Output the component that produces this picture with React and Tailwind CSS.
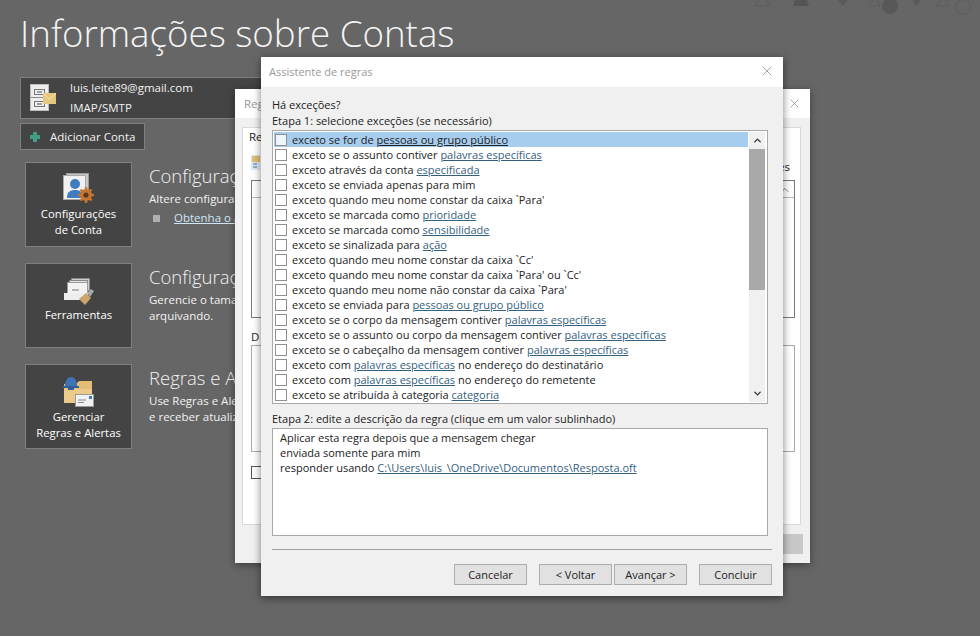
import React from "react";
import { X, ChevronUp, ChevronDown } from "lucide-react";

const rules = [
  [["exceto se for de "], ["pessoas ou grupo público", true]],
  [["exceto se o assunto contiver "], ["palavras específicas", true]],
  [["exceto através da conta "], ["especificada", true]],
  [["exceto se enviada apenas para mim"]],
  [["exceto quando meu nome constar da caixa `Para'"]],
  [["exceto se marcada como "], ["prioridade", true]],
  [["exceto se marcada como "], ["sensibilidade", true]],
  [["exceto se sinalizada para "], ["ação", true]],
  [["exceto quando meu nome constar da caixa `Cc'"]],
  [["exceto quando meu nome constar da caixa `Para' ou `Cc'"]],
  [["exceto quando meu nome não constar da caixa `Para'"]],
  [["exceto se enviada para "], ["pessoas ou grupo público", true]],
  [["exceto se o corpo da mensagem contiver "], ["palavras específicas", true]],
  [["exceto se o assunto ou corpo da mensagem contiver "], ["palavras específicas", true]],
  [["exceto se o cabeçalho da mensagem contiver "], ["palavras específicas", true]],
  [["exceto com "], ["palavras específicas", true], [" no endereço do destinatário"]],
  [["exceto com "], ["palavras específicas", true], [" no endereço do remetente"]],
  [["exceto se atribuída à categoria "], ["categoria", true]],
];

function AccountIcon() {
  return (
    <svg width="27" height="28" viewBox="0 0 27 28">
      <rect x="0.5" y="0.5" width="18" height="26" fill="#eeeeee" stroke="#bdbdbd" />
      <line x1="1" y1="13.5" x2="18" y2="13.5" stroke="#8a8a8a" />
      <rect x="4.5" y="5.5" width="10" height="5" fill="none" stroke="#777" />
      <rect x="4.5" y="17.5" width="10" height="5" fill="none" stroke="#777" />
      <line x1="7" y1="8" x2="12" y2="8" stroke="#555" />
      <line x1="7" y1="20" x2="12" y2="20" stroke="#555" />
      <rect x="13" y="9" width="13" height="11" fill="#e5c77f" />
      <path d="M13 9l6.5 6 6.5-6" fill="none" stroke="#f6e6b8" />
    </svg>
  );
}

function SettingsIcon() {
  return (
    <svg width="31" height="30" viewBox="0 0 31 30">
      <rect x="3.5" y="0.5" width="22" height="23" fill="#c9c9c9" stroke="#9a9a9a" />
      <rect x="0.5" y="2.5" width="22" height="24" fill="#f1f1f1" stroke="#a8a8a8" />
      <circle cx="12" cy="11" r="5" fill="#3f7cc0" />
      <path d="M4 25c0-6 3-8 8-8s8 2 8 8z" fill="#3f7cc0" />
      <circle cx="23" cy="22" r="6" fill="#c9752e" />
      <g stroke="#c9752e" strokeWidth="2.4">
        <line x1="23" y1="14" x2="23" y2="30" />
        <line x1="15" y1="22" x2="31" y2="22" />
        <line x1="17.5" y1="16.5" x2="28.5" y2="27.5" />
        <line x1="28.5" y1="16.5" x2="17.5" y2="27.5" />
      </g>
      <circle cx="23" cy="22" r="2.6" fill="#5a3a1e" />
    </svg>
  );
}

function ToolsIcon() {
  return (
    <svg width="30" height="28" viewBox="0 0 30 28">
      <rect x="7.5" y="0.5" width="18" height="12" fill="#cfcfcf" stroke="#8a8a8a" />
      <rect x="5.5" y="2.5" width="18" height="12" fill="#e2e2e2" stroke="#8a8a8a" />
      <rect x="3.5" y="4.5" width="20" height="13" fill="#f2f2f2" stroke="#9a9a9a" />
      <line x1="8" y1="12" x2="15" y2="12" stroke="#777" />
      <rect x="0" y="15" width="24" height="7" fill="#ededed" />
      <path d="M15 21l7-6 5 5-6 7z" fill="#c9a56a" />
      <path d="M23 15l4-4 3 2-4 6z" fill="#a8a8a8" />
    </svg>
  );
}

function RulesIcon() {
  return (
    <svg width="31" height="32" viewBox="0 0 31 32">
      <path d="M1 9h12l3-3h13v22H1z" fill="#e2bd74" />
      <path d="M1 14h28v14H1z" fill="#eccb8a" />
      <path d="M2 11c0-12 12-12 12 0v2H2z" fill="#3f73b5" />
      <rect x="0" y="11" width="16" height="2" fill="#2f5f9e" />
      <rect x="5" y="13" width="6" height="2" fill="#2f5f9e" />
      <rect x="12.5" y="19.5" width="18" height="12" fill="#f2f2f2" stroke="#9a9a9a" />
      <rect x="26" y="21" width="3" height="3" fill="#3f7cc0" />
      <line x1="15" y1="25" x2="23" y2="25" stroke="#888" />
      <line x1="15" y1="27.5" x2="21" y2="27.5" stroke="#888" />
    </svg>
  );
}

function Tile({ icon, lines, area }) {
  return (
    <button className="w-[107px] h-[85px] shrink-0 bg-[#444444] border border-[#7f7f7f] flex flex-col items-center text-white text-[11.3px] leading-[16px]">
      <div className={`flex justify-center items-end ${area}`}>{icon}</div>
      <div>
        {lines.map((l) => (
          <div key={l}>{l}</div>
        ))}
      </div>
    </button>
  );
}

function Section({ icon, lines, area, title, children }) {
  return (
    <div className="flex gap-[17px] h-[85px]">
      <Tile icon={icon} lines={lines} area={area} />
      <div className="w-[86px] overflow-hidden text-[#f2f2f2] whitespace-nowrap">
        <div className="text-[18.5px] leading-[26px] font-light pt-[1px]">{title}</div>
        <div className="text-[11.5px] leading-[16px] pt-[2px]">{children}</div>
      </div>
    </div>
  );
}

function WizardButton({ children }) {
  return (
    <button className="w-[73px] h-[21px] bg-[#e1e1e1] border border-[#adadad] text-[11px] text-[#222] leading-none">
      {children}
    </button>
  );
}

function RulesDialog() {
  return (
    <div className="absolute left-[235px] top-[89px] w-[575px] h-[474px] bg-[#f0f0f0] shadow-[0_2px_8px_rgba(0,0,0,0.4)] flex flex-col text-[#222]">
      <div className="h-[29px] bg-white flex items-center justify-between pl-[9px] pr-[8px] text-[11.5px] text-[#999]">
        <span>Reg</span>
        <X size={15} strokeWidth={1} className="text-[#777]" />
      </div>
      <div className="flex-1 pl-[7px] pr-[9px] flex flex-col">
        <div className="mt-[9px] h-[398px] bg-white border border-[#d9d9d9] pl-[8px] pr-[5px] flex flex-col">
          <div className="text-[11.5px] leading-[16px] pt-[1px] -ml-[2px]">Re</div>
          <div className="h-[35px] flex items-center justify-between text-[11.5px]">
            <div className="w-[9px] h-[15px] overflow-hidden">
              <svg width="14" height="15" viewBox="0 0 14 15">
                <rect x="0" y="0" width="14" height="15" fill="#dbe9f6" />
                <rect x="1" y="1" width="9" height="6" fill="#e2bd74" />
                <path d="M2 9h4M2 12h4" stroke="#47708f" />
              </svg>
            </div>
            <span className="mt-[8px] mr-[5px]">es</span>
          </div>
          <div className="h-[138px] border border-[#7a7a7a] text-[#888] flex flex-col">
            <div className="h-[17px] border-b border-[#bbb] flex justify-end">
              <ChevronUp size={12} className="mt-[3px] mr-[3px]" />
            </div>
          </div>
          <div className="text-[11.5px] leading-[16px] mt-[11px]">D</div>
          <div className="h-[107px] border border-[#aaa]"></div>
          <div className="mt-[14px] w-[12px] h-[13px] border border-[#555]"></div>
        </div>
        <div className="flex justify-end mt-[9px] -mr-[2px]">
          <div className="w-[73px] h-[20px] bg-[#c8c8c8]"></div>
        </div>
      </div>
    </div>
  );
}

function WizardDialog() {
  return (
    <div className="absolute left-[261px] top-[57px] w-[522px] h-[539px] bg-[#f0f0f0] shadow-[0_2px_8px_rgba(0,0,0,0.5)] flex flex-col text-[#222] text-[11px] leading-[15px]">
      <div className="h-[30px] bg-white flex items-center justify-between pl-[8px] pr-[8px] pb-[2px] shrink-0">
        <span className="text-[#999]">Assistente de regras</span>
        <X size={16} strokeWidth={1} className="text-[#777]" />
      </div>
      <div className="pl-[11px] pr-[11px] flex-1 flex flex-col">
        <div className="mt-[10px] leading-[16px]">Há exceções?</div>
        <div className="leading-[16px]">Etapa 1: selecione exceções (se necessário)</div>
        <div className="mt-[1px] mr-[4px] h-[274px] bg-white border border-[#a8a8a8] flex p-[1px] pr-[2px]">
          <div className="flex-1 overflow-hidden">
            {rules.map((rule, i) => (
              <div key={i} className={`h-[15px] flex items-center pl-[1px] whitespace-nowrap ${i === 0 ? "bg-[#a6cdee]" : ""}`}>
                <span className={`w-[12px] h-[12px] shrink-0 border border-[#8f8f8f] mr-[5px] ${i === 0 ? "bg-[#eef5fb]" : "bg-white"}`}></span>
                <span>
                  {rule.map(([t, link], j) => (
                    <span key={j} className={link ? (i === 0 ? "underline text-[#222]" : "underline text-[#34607f]") : ""}>{t}</span>
                  ))}
                </span>
              </div>
            ))}
          </div>
          <div className="w-[16px] ml-[1px] bg-[#f0f0f0] flex flex-col items-center">
            <div className="h-[17px] flex items-center text-[#333]">
              <ChevronUp size={11} strokeWidth={3} />
            </div>
            <div className="flex-1 w-full flex flex-col">
              <div className="h-[141px] bg-[#a9a9a9]"></div>
            </div>
            <div className="h-[17px] flex items-center text-[#333]">
              <ChevronDown size={11} strokeWidth={3} />
            </div>
          </div>
        </div>
        <div className="mt-[7px] leading-[16px]">Etapa 2: edite a descrição da regra (clique em um valor sublinhado)</div>
        <div className="mt-[1px] mr-[4px] h-[108px] bg-white border border-[#a8a8a8] px-[7px] pt-[1px]">
          <div>Aplicar esta regra depois que a mensagem chegar</div>
          <div>enviada somente para mim</div>
          <div>
            responder usando <span className="underline text-[#34607f]">C:\Users\luis_\OneDrive\Documentos\Resposta.oft</span>
          </div>
        </div>
        <div className="mt-[13px] border-t border-[#a0a0a0]"></div>
        <div className="mt-[14px] flex justify-end">
          <WizardButton>Cancelar</WizardButton>
          <div className="ml-[12px]"><WizardButton>&lt; Voltar</WizardButton></div>
          <div className="ml-[2px]"><WizardButton>Avançar &gt;</WizardButton></div>
          <div className="ml-[12px]"><WizardButton>Concluir</WizardButton></div>
        </div>
      </div>
    </div>
  );
}

export default function App() {
  return (
    <div className="relative w-[980px] h-[636px] overflow-hidden bg-[#666666] font-['Open_Sans','Noto_Sans',sans-serif]">
      {/* faint shapes left over at the top right corner */}
      <div className="absolute left-[750px] top-0">
        <svg width="230" height="16" viewBox="0 0 230 16">
          <path d="M4 6l5-6M20 6l-3-6M4 6h16" fill="none" stroke="#5d5d5d" />
          <path d="M45 0h12l2 6H43z" fill="#555555" />
          <path d="M88 0h10l-5 6z" fill="#5a5a5a" />
          <path d="M118 6h12M118 6l5-6M130 6l-3-6" fill="none" stroke="#5d5d5d" />
          <circle cx="140" cy="6" r="8" fill="#585858" />
          <path d="M162 0h9l-4.500 6z" fill="#5a5a5a" />
          <path d="M186 6h13M186 6l5-6M199 6l-3-6" fill="none" stroke="#5d5d5d" />
          <circle cx="213" cy="7" r="7.500" fill="none" stroke="#5d5d5d" />
        </svg>
      </div>

      <div className="pl-[20px] pt-[10px] flex flex-col">
        <h1 className="text-[36.7px] leading-[46px] font-light text-[#f4f4f4] whitespace-nowrap">Informações sobre Contas</h1>

        <div className="mt-[21px] w-[500px] h-[42px] bg-[#444444] border border-[#7f7f7f] flex items-center text-[#f2f2f2] text-[11.5px]">
          <div className="ml-[9px] mr-[13px]"><AccountIcon /></div>
          <div className="leading-[20px]">
            <div>luis.leite89@gmail.com</div>
            <div>IMAP/SMTP</div>
          </div>
        </div>

        <button className="mt-[4px] w-[125px] h-[27px] bg-[#444444] border border-[#7f7f7f] flex items-center text-[#f2f2f2] text-[11.5px]">
          <span className="ml-[9px] w-[10px] h-[10px] relative">
            <span className="absolute left-[3px] top-0 w-[4px] h-[10px] bg-[#3f9e84]"></span>
            <span className="absolute left-0 top-[3px] w-[10px] h-[4px] bg-[#3f9e84]"></span>
          </span>
          <span className="ml-[10px]">Adicionar Conta</span>
        </button>

        <div className="mt-[12px] ml-[5px] flex flex-col gap-[16px]">
          <Section
            icon={<SettingsIcon />}
            lines={["Configurações", "de Conta"]}
            area="h-[43px] pb-[3px]"
            title="Configuraç"
          >
            <div>Altere configura</div>
            <div className="flex items-center mt-[3px]">
              <span className="ml-[4px] w-[7px] h-[7px] shrink-0 bg-[#b0b0b0]"></span>
              <span className="ml-[14px] underline text-[#cfe6f5]">Obtenha o a</span>
            </div>
          </Section>
          <Section
            icon={<ToolsIcon />}
            lines={["Ferramentas"]}
            area="h-[43px] pb-[1px]"
            title="Configuraç"
          >
            <div>Gerencie o tama</div>
            <div>arquivando.</div>
          </Section>
          <Section
            icon={<RulesIcon />}
            lines={["Gerenciar", "Regras e Alertas"]}
            area="h-[44px] pb-[2px]"
            title="Regras e A"
          >
            <div>Use Regras e Ale</div>
            <div>e receber atualiz</div>
          </Section>
        </div>
      </div>

      <RulesDialog />
      <WizardDialog />
    </div>
  );
}
